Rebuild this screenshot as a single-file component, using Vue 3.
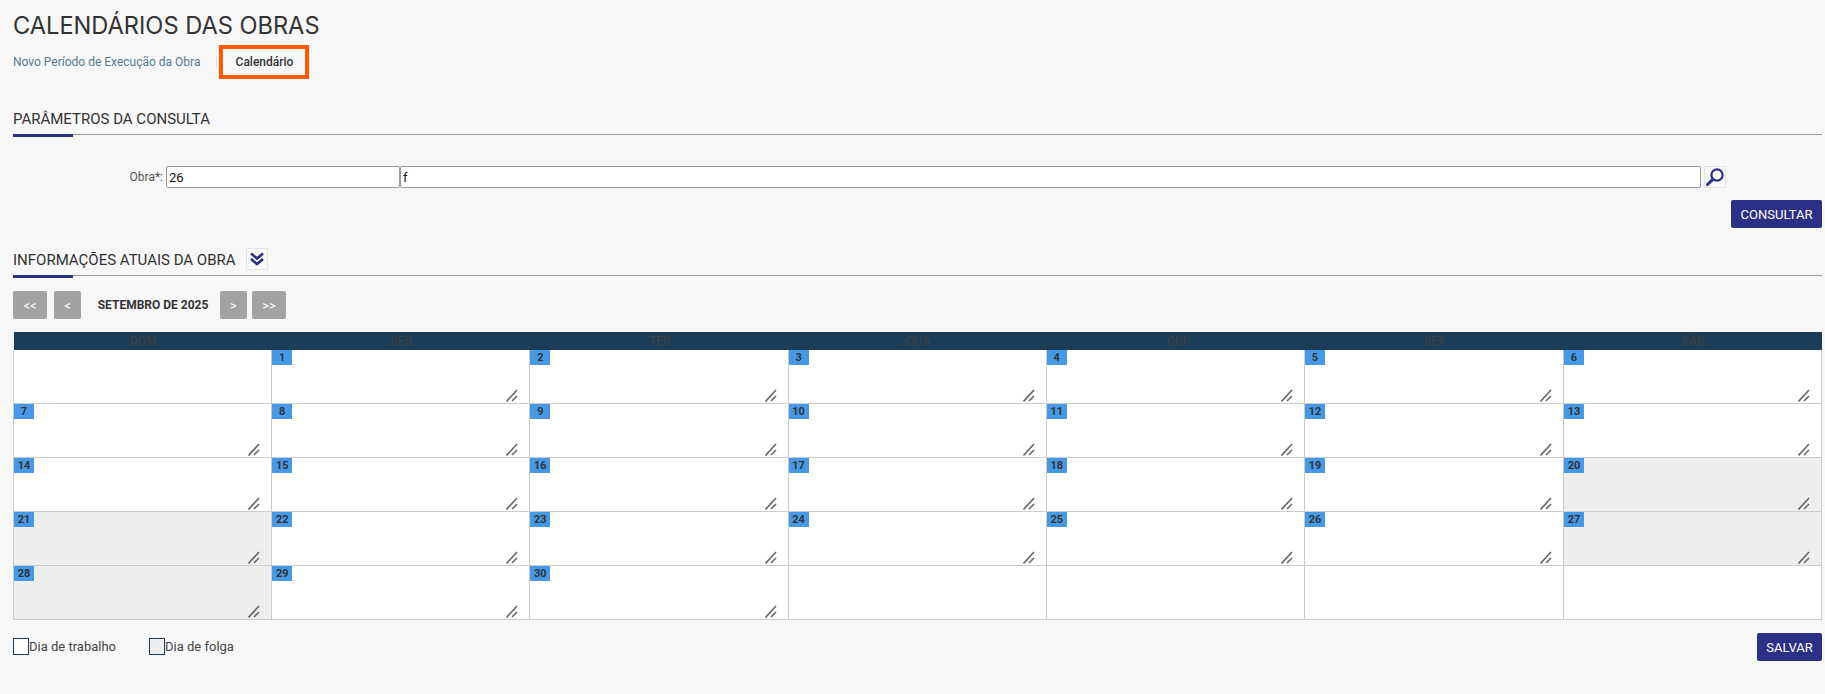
<template>
  <div class="page">
    <h1 class="title">CALENDÁRIOS DAS OBRAS</h1>

    <div class="tabs">
      <a class="tab">Novo Período de Execução da Obra</a>
      <span class="tab-sep"></span>
      <a class="tab active">Calendário</a>
    </div>

    <div class="section-head first">
      <span class="section-title">PARÂMETROS DA CONSULTA</span>
    </div>

    <div class="form-row">
      <label class="form-label">Obra*:</label>
      <input class="input code" value="26" />
      <input class="input name" value="f" />
      <button class="icon-btn search-btn">
        <svg width="20" height="20" viewBox="0 0 20 20">
          <circle cx="12" cy="8" r="5.6" fill="none" stroke="#2b3087" stroke-width="2.2" />
          <path d="M7.8 12.400 L2.500 17.500" stroke="#2b3087" stroke-width="3" stroke-linecap="round" />
        </svg>
      </button>
    </div>

    <div class="actions">
      <button class="btn">CONSULTAR</button>
    </div>

    <div class="section-head second">
      <span class="section-title">INFORMAÇÕES ATUAIS DA OBRA</span>
      <button class="icon-btn toggle-btn">
        <svg width="14" height="14" viewBox="0 0 14 14">
          <path d="M1 1.5 L7 6.500 L13 1.5" fill="none" stroke="#2b3087" stroke-width="2.6" />
          <path d="M1 7 L7 12 L13 7" fill="none" stroke="#2b3087" stroke-width="2.6" />
        </svg>
      </button>
    </div>

    <div class="month-nav">
      <button class="nav-btn wide">&lt;&lt;</button>
      <button class="nav-btn prev">&lt;</button>
      <span class="month">SETEMBRO DE 2025</span>
      <button class="nav-btn next">&gt;</button>
      <button class="nav-btn wide last">&gt;&gt;</button>
    </div>

    <div class="calendar">
      <div class="week-head">
        <div v-for="d in weekDays" :key="d" class="week-day">{{ d }}</div>
      </div>
      <div class="days">
        <div
          v-for="(cell, index) in cells"
          :key="index"
          :class="['day', { off: cell.off }]"
        >
          <template v-if="cell.day">
            <span class="day-num">{{ cell.day }}</span>
            <svg class="resize" width="12" height="13" viewBox="0 0 12 13">
              <path d="M0.500 12.500 L11 1" stroke="#666" stroke-width="1.6" />
              <path d="M6 12 L11 7" stroke="#666" stroke-width="1.6" />
            </svg>
          </template>
        </div>
      </div>
    </div>

    <div class="footer">
      <div class="legend">
        <span class="swatch"></span>
        <span class="legend-text">Dia de trabalho</span>
      </div>
      <div class="legend">
        <span class="swatch off"></span>
        <span class="legend-text">Dia de folga</span>
      </div>
      <button class="btn save">SALVAR</button>
    </div>
  </div>
</template>

<script setup>
const weekDays = ['DOM', 'SEG', 'TER', 'QUA', 'QUI', 'SEX', 'SÁB'];
const offDays = [20, 21, 27, 28];

// setembro/2025 starts on a monday, so one blank cell before and four after
const cells = [
  { day: null },
  ...Array.from({ length: 30 }, (_, i) => ({ day: i + 1, off: offDays.includes(i + 1) })),
  { day: null },
  { day: null },
  { day: null },
  { day: null },
];
</script>

<style>
html,
body {
  margin: 0;
  background: #f7f7f7;
}
</style>

<style scoped>
.page {
  box-sizing: border-box;
  width: 1825px;
  height: 694px;
  padding: 13px 3px 0 13px;
  background: #f7f7f7;
  font-family: Roboto, "Liberation Sans", sans-serif;
  color: #333;
  overflow: hidden;
}

.title {
  margin: 0;
  font-family: Inter, "Liberation Sans", sans-serif;
  font-size: 23.6px;
  line-height: 26px;
  font-weight: 400;
  color: #333;
}

.tabs {
  display: flex;
  align-items: center;
  height: 34px;
  margin-top: 6px;
}
.tab {
  font-size: 12px;
  color: #5a7a90;
}
.tab-sep {
  width: 1px;
  height: 10px;
  margin: 0 1px 0 16px;
  background: #ddd;
}
.tab.active {
  box-sizing: border-box;
  width: 90px;
  height: 34px;
  margin-left: 1px;
  border: 4px solid #ff5a00;
  font-weight: 500;
  color: #333;
  text-align: center;
  line-height: 26px;
}

.section-head {
  position: relative;
  display: flex;
  align-items: center;
  height: 26px;
  padding-bottom: 2px;
  border-bottom: 1px solid #999;
}
.section-head::after {
  content: "";
  position: absolute;
  left: 0;
  bottom: -3px;
  width: 60px;
  height: 3px;
  background: #2b3087;
}
.section-head.first {
  margin-top: 27px;
}
.section-head.second {
  margin-top: 19px;
}
.section-title {
  font-size: 15px;
  color: #333;
}

.form-row {
  display: flex;
  align-items: center;
  margin-top: 31px;
}
.form-label {
  width: 150px;
  margin-right: 3px;
  font-size: 12px;
  color: #555;
  text-align: right;
}
.input {
  box-sizing: border-box;
  height: 22px;
  padding: 0 2px;
  border: 1px solid #999;
  border-radius: 2px;
  background: #fff;
  font-family: Roboto, "Liberation Sans", sans-serif;
  font-size: 13px;
  color: #111;
  outline: none;
}
.input.code {
  width: 234px;
}
.input.name {
  width: 1301px;
}
.icon-btn {
  display: flex;
  align-items: center;
  justify-content: center;
  box-sizing: border-box;
  width: 22px;
  height: 22px;
  padding: 0;
  border: 1px solid #e4e4e4;
  background: #fafafa;
}
.search-btn {
  margin-left: 3px;
}
.toggle-btn {
  margin-left: 10px;
  margin-bottom: 2px;
}

.actions {
  display: flex;
  justify-content: flex-end;
  margin-top: 12px;
}
.btn {
  box-sizing: border-box;
  height: 28px;
  padding: 0;
  width: 91px;
  border: none;
  border-radius: 2px;
  background: #2b3087;
  color: #fff;
  font-family: Roboto, "Liberation Sans", sans-serif;
  font-size: 13px;
}
.btn.save {
  width: 65px;
  margin-left: auto;
}

.month-nav {
  display: flex;
  align-items: center;
  margin-top: 15px;
}
.nav-btn {
  height: 28px;
  padding: 0;
  border: none;
  border-radius: 2px;
  background: #a2a2a2;
  color: #fff;
  font-family: Roboto, "Liberation Sans", sans-serif;
  font-size: 13px;
}
.nav-btn.wide {
  width: 34px;
}
.nav-btn.prev {
  width: 27px;
  margin-left: 7px;
}
.nav-btn.next {
  width: 27px;
}
.nav-btn.last {
  margin-left: 5px;
}
.month {
  box-sizing: border-box;
  width: 139px;
  padding-left: 5px;
  text-align: center;
  font-size: 12px;
  font-weight: 700;
  color: #333;
}

.calendar {
  width: 1809px;
  margin-top: 13px;
}
.week-head {
  display: grid;
  grid-template-columns: repeat(7, 1fr);
  height: 18px;
  margin-left: 1px;
  background: #1b3d58;
}
.week-day {
  font-size: 12px;
  line-height: 18px;
  color: #404040;
  text-align: center;
}
.days {
  display: grid;
  grid-template-columns: repeat(5, 258.2px) 259px 1fr;
  grid-auto-rows: 54px;
  border-left: 1px solid #ccc;
}
.day {
  position: relative;
  box-sizing: border-box;
  border-right: 1px solid #ccc;
  border-bottom: 1px solid #ccc;
  background: #fff;
}
.day.off {
  background: #eee;
}
.day-num {
  display: block;
  width: 20px;
  height: 15px;
  background: #4599e6;
  font-size: 11px;
  font-weight: 700;
  line-height: 15px;
  color: #333;
  text-align: center;
}
.resize {
  position: absolute;
  right: 11px;
  bottom: 1px;
}

.footer {
  display: flex;
  align-items: center;
  height: 28px;
  margin-top: 13px;
}
.legend {
  display: flex;
  align-items: center;
  margin-right: 33px;
  margin-bottom: 1px;
}
.swatch {
  box-sizing: border-box;
  width: 16px;
  height: 17px;
  border: 1px solid #1b3d58;
  background: #fff;
}
.swatch.off {
  background: #eee;
}
.legend-text {
  font-size: 13px;
  color: #444;
}
</style>
